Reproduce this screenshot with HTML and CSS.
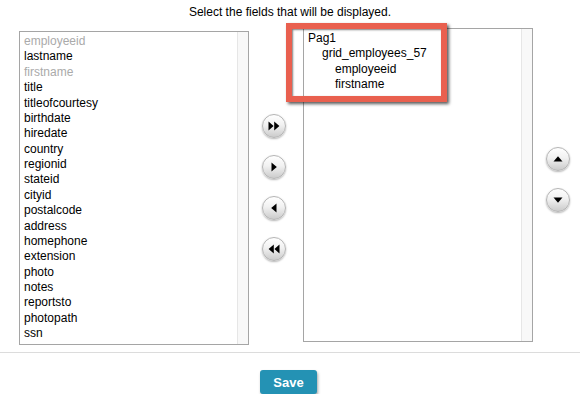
FILE: index.html
```html
<!DOCTYPE html>
<html lang="en">

<head>
    <meta charset="UTF-8">
    <meta name="viewport" content="width=device-width, initial-scale=1.0">
    <title>Select fields</title>
    <link rel="stylesheet" href="styles.css">
</head>

<body>
    <p class="caption">Select the fields that will be displayed.</p>

    <div class="picker">
        <div class="list list-source">
            <ul class="items">
                <li class="disabled">employeeid</li>
                <li>lastname</li>
                <li class="disabled">firstname</li>
                <li>title</li>
                <li>titleofcourtesy</li>
                <li>birthdate</li>
                <li>hiredate</li>
                <li>country</li>
                <li>regionid</li>
                <li>stateid</li>
                <li>cityid</li>
                <li>postalcode</li>
                <li>address</li>
                <li>homephone</li>
                <li>extension</li>
                <li>photo</li>
                <li>notes</li>
                <li>reportsto</li>
                <li>photopath</li>
                <li>ssn</li>
            </ul>
            <div class="gutter"></div>
        </div>

        <div class="moves">
            <button class="round" title="Add all">
                <svg width="12" height="10" viewBox="0 0 12 10"><path d="M0.5 0.5 L5.6 5 L0.5 9.5 Z M6.2 0.5 L11.4 5 L6.2 9.5 Z" fill="#000"/></svg>
            </button>
            <button class="round" title="Add">
                <svg width="8" height="10" viewBox="0 0 8 10"><path d="M1.5 0.5 L6.8 5 L1.5 9.5 Z" fill="#000"/></svg>
            </button>
            <button class="round" title="Remove">
                <svg width="8" height="10" viewBox="0 0 8 10"><path d="M6.5 0.5 L1.2 5 L6.5 9.5 Z" fill="#000"/></svg>
            </button>
            <button class="round" title="Remove all">
                <svg width="12" height="10" viewBox="0 0 12 10"><path d="M5.8 0.5 L0.6 5 L5.8 9.5 Z M11.5 0.5 L6.4 5 L11.5 9.5 Z" fill="#000"/></svg>
            </button>
        </div>

        <div class="list list-target">
            <ul class="items">
                <li>Pag1</li>
                <li class="level-1">grid_employees_57</li>
                <li class="level-2">employeeid</li>
                <li class="level-2">firstname</li>
            </ul>
            <div class="gutter"></div>
            <div class="highlight"></div>
        </div>

        <div class="order">
            <button class="round" title="Move up">
                <svg width="10" height="8" viewBox="0 0 10 8"><path d="M0.5 6.5 L5 1.2 L9.5 6.5 Z" fill="#000"/></svg>
            </button>
            <button class="round" title="Move down">
                <svg width="10" height="8" viewBox="0 0 10 8"><path d="M0.5 1.5 L5 6.8 L9.5 1.5 Z" fill="#000"/></svg>
            </button>
        </div>
    </div>

    <div class="actions">
        <button class="save">Save</button>
    </div>
</body>

</html>
```

FILE: styles.css
```css
body {
    margin: 0;
    font-family: "Liberation Sans", Arial, Helvetica, sans-serif;
    font-size: 12px;
    color: #000;
    background-color: #fff;
}

.caption {
    margin: 0;
    padding-top: 5px;
    line-height: 14px;
    text-align: center;
}

.picker {
    display: flex;
    align-items: flex-start;
    padding-left: 19px;
    margin-top: 9px;
}

.list {
    position: relative;
    display: flex;
    width: 230px;
    height: 314px;
    box-sizing: border-box;
    border: 1px solid #a5a5a5;
    background-color: #fff;
}

.list-source {
    margin-top: 3px;
}

.items {
    flex: 1;
    list-style: none;
    margin: 0;
    padding: 2px 4px 0;
}

.items li {
    line-height: 15.37px;
    white-space: nowrap;
}

.items li.disabled {
    color: #aaa;
}

.items li.level-1 {
    padding-left: 14px;
}

.items li.level-2 {
    padding-left: 27px;
}

.gutter {
    width: 10px;
    border-left: 1px solid #e6e6e6;
    background-color: #f8f8f8;
}

.highlight {
    position: absolute;
    left: -18px;
    top: -6px;
    width: 161px;
    height: 79px;
    box-sizing: border-box;
    border: 6px solid #e9604f;
    box-shadow: 2px 2px 3px rgba(0, 0, 0, 0.65), inset 1px 1px 2px rgba(0, 0, 0, 0.5);
}

.moves,
.order {
    display: flex;
    flex-direction: column;
    gap: 17px;
}

.moves {
    width: 54px;
    padding-top: 86px;
    padding-left: 13px;
    box-sizing: border-box;
}

.order {
    padding-top: 119px;
    padding-left: 13px;
}

.round {
    display: flex;
    align-items: center;
    justify-content: center;
    width: 24px;
    height: 24px;
    padding: 0;
    border: 1px solid #b5b5b5;
    border-radius: 50%;
    background: linear-gradient(#ffffff, #f1f1f1 45%, #cbcbcb);
    box-shadow: 0 1px 2px rgba(0, 0, 0, 0.3);
    cursor: pointer;
}

.actions {
    margin-top: 7px;
    border-top: 1px solid #dcdcdc;
    padding-top: 17px;
    text-align: center;
}

.save {
    width: 57px;
    height: 24px;
    margin-right: 3px;
    padding: 0;
    border: none;
    border-radius: 3px;
    background-color: #2492b4;
    box-shadow: 1px 2px 3px rgba(0, 0, 0, 0.35);
    color: #fff;
    font-family: "Liberation Sans", Arial, Helvetica, sans-serif;
    font-size: 13px;
    font-weight: bold;
    cursor: pointer;
}
```
